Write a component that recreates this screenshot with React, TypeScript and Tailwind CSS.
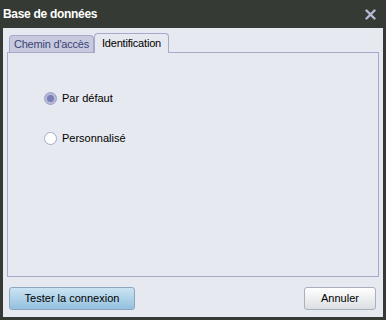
export default function App() {
  return (
    <div
      className="w-[386px] h-[320px] bg-[#353a35] flex flex-col px-[3px] pb-[3px] text-[11px] text-black"
      style={{ fontFamily: '"Liberation Sans", Arial, sans-serif' }}
    >
      {/* Title bar */}
      <div className="h-[28px] flex items-center justify-between pr-[7px] shrink-0">
        <span className="text-white font-bold text-[12px] tracking-[-0.3px]">Base de données</span>
        <svg width="11" height="11" viewBox="0 0 11 11">
          <path d="M1.5 1.5 L9.5 9.5 M9.5 1.5 L1.5 9.5" stroke="#b7b9d6" strokeWidth="2.4" strokeLinecap="round" />
        </svg>
      </div>

      {/* Body */}
      <div className="flex-1 bg-[#e6e9ef] flex flex-col px-[4px] pt-[5px] pb-[6px]">
        {/* Tabs */}
        <div className="flex items-end h-[19px] pl-[2px] relative z-10">
          <div className="w-[85px] h-[17px] flex items-center justify-center border border-b-0 border-[#a6a9c9] rounded-t-[4px] bg-[#c7cadf] text-[#3b4275] tracking-[-0.2px]">
            Chemin d'accès
          </div>
          <div className="w-[75px] h-[20px] -mb-[1px] flex items-center justify-center border border-b-0 border-[#a6a9c9] rounded-t-[4px] bg-[#e6e9ef] tracking-[-0.2px]">
            Identification
          </div>
        </div>
        <div className="h-[225px] border border-[#a6a9c9] bg-[#e6e9ef] flex flex-col gap-[27px] pl-[36px] pt-[39px]">
          <label className="h-[13px] flex items-center gap-[5px]">
            <span className="w-[13px] h-[13px] rounded-full bg-[#b5b8d6] border border-[#9ea2c8] flex items-center justify-center">
              <span className="w-[7px] h-[7px] rounded-full bg-[#7a7fb5]" />
            </span>
            <span>Par défaut</span>
          </label>
          <label className="h-[13px] flex items-center gap-[5px]">
            <span className="w-[13px] h-[13px] rounded-full bg-white border border-[#a6a9c9]" />
            <span>Personnalisé</span>
          </label>
        </div>

        {/* Buttons */}
        <div className="flex justify-between items-end mt-[10px] pl-[2px] pr-[3px]">
          <button className="w-[126px] h-[23px] rounded-[3px] border border-[#8ea6bd] bg-gradient-to-b from-[#cbe3f2] to-[#93c1df] text-[11px]">
            Tester la connexion
          </button>
          <button className="w-[72px] h-[23px] rounded-[3px] border border-[#a9b0bd] bg-gradient-to-b from-[#ffffff] to-[#dcdee2] text-[11px]">
            Annuler
          </button>
        </div>
      </div>
    </div>
  );
}
